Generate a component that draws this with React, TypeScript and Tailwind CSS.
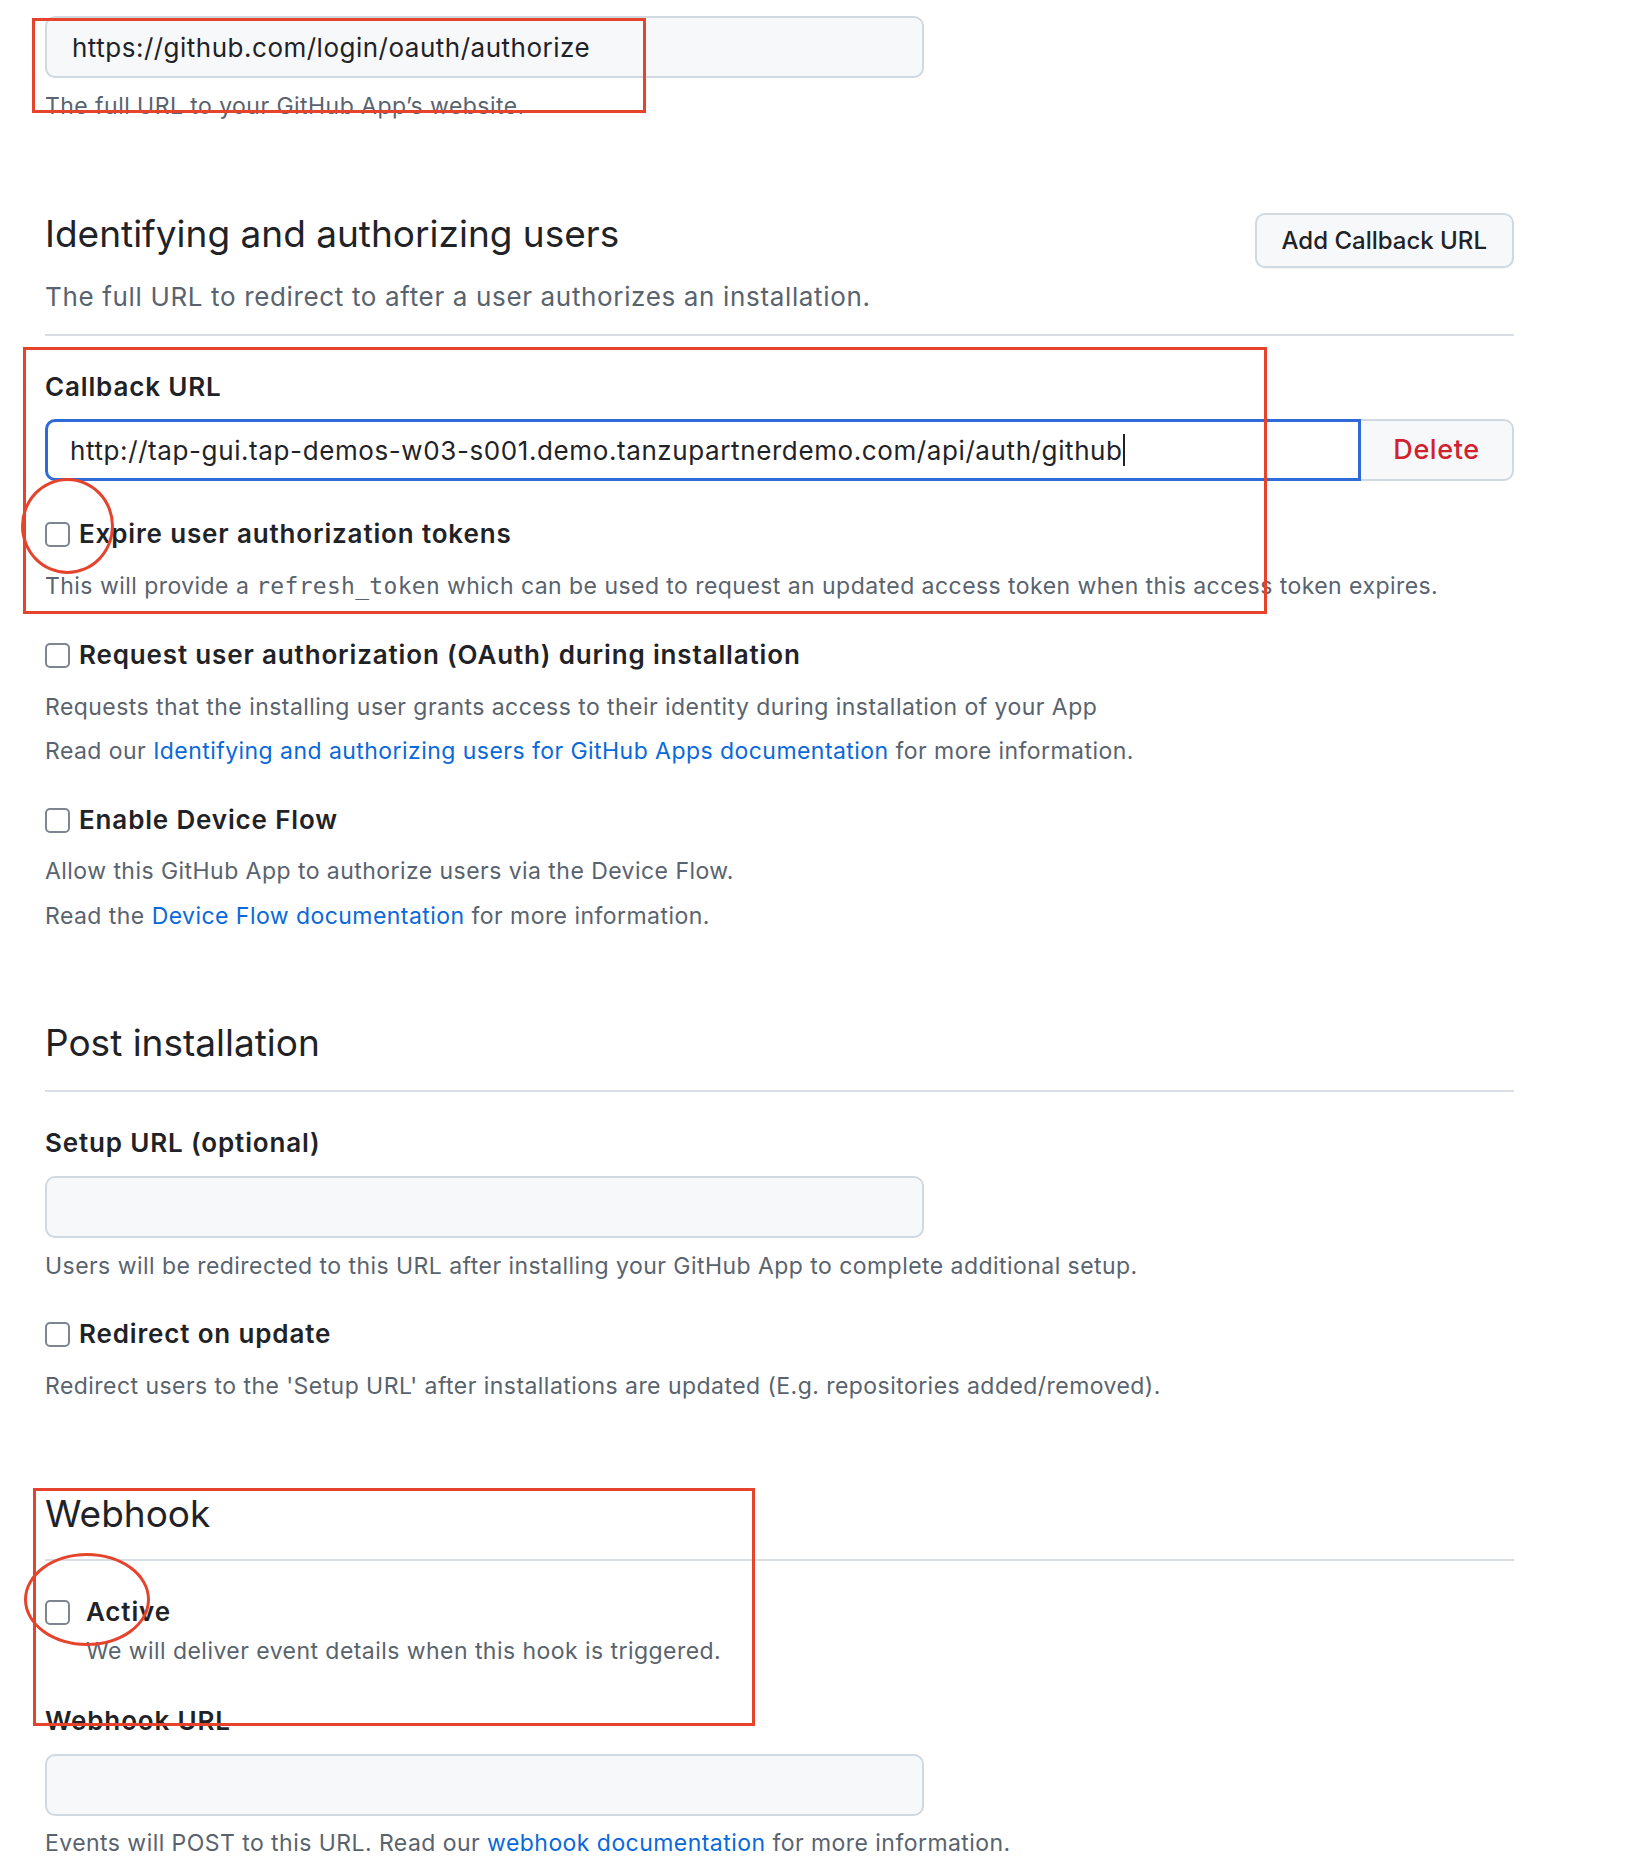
import type { ReactNode } from "react";

const Note = ({ children, className = "" }: { children: ReactNode; className?: string }) => (
  <p className={`text-[23px] leading-[32px] tracking-[0.45px] text-[#59636e] ${className}`}>{children}</p>
);

const Label = ({ children, className = "" }: { children: ReactNode; className?: string }) => (
  <div className={`text-[26px] leading-[34px] font-semibold tracking-[0.85px] ${className}`}>{children}</div>
);

const Heading = ({ children, className = "" }: { children: ReactNode; className?: string }) => (
  <h2 className={`text-[37px] leading-[46px] font-normal ${className}`}>{children}</h2>
);

const Divider = ({ className = "" }: { className?: string }) => (
  <div className={`h-[2px] bg-[#d8dee4] ${className}`} />
);

const Box = () => (
  <span className="inline-block w-[25px] h-[25px] shrink-0 rounded-[5px] border-2 border-[#7d8590] bg-white" />
);

const CheckRow = ({ children, className = "", gap = "gap-[9px]" }: { children: ReactNode; className?: string; gap?: string }) => (
  <label className={`flex items-center ${gap} ${className}`}>
    <Box />
    <span className="text-[26px] leading-[34px] font-semibold tracking-[0.85px]">{children}</span>
  </label>
);

const Link = ({ children }: { children: ReactNode }) => (
  <a className="text-[#0969da]">{children}</a>
);

const Field = ({ value, className = "" }: { value?: string; className?: string }) => (
  <div
    className={`w-[879px] h-[62px] rounded-[10px] border-2 border-[#d1d9e0] bg-[#f6f8fa] px-[25px] flex items-center text-[26px] tracking-[0.5px] ${className}`}
  >
    {value}
  </div>
);

export default function App() {
  return (
    <div className="relative w-[1630px] h-[1872px] overflow-hidden bg-white font-['Inter',sans-serif] text-[#1f2328]">
      <div className="pl-[45px] w-[1514px] pt-[16px]">
        <Field value="https://github.com/login/oauth/authorize" />
        <Note className="mt-[12px] leading-[30px]">The full URL to your GitHub App’s website.</Note>

        <div className="mt-[91px] flex items-start justify-between">
          <Heading className="-mt-[2px]">Identifying and authorizing users</Heading>
          <button className="h-[55px] px-[25px] rounded-[10px] border-2 border-[#d1d9e0] bg-[#f6f8fa] text-[24px] font-medium shadow-[0_1px_0_rgba(31,35,40,0.04)]">
            Add Callback URL
          </button>
        </div>
        <p className="mt-[13px] text-[26px] leading-[32px] tracking-[0.65px] text-[#59636e]">
          The full URL to redirect to after a user authorizes an installation.
        </p>
        <Divider className="mt-[21px]" />

        <Label className="mt-[34px]">Callback URL</Label>
        <div className="mt-[15px] flex h-[62px]">
          <div className="flex-1 flex items-center rounded-l-[10px] border-[3px] border-[#2f6bd8] bg-white pl-[22px] text-[26px] tracking-[0.6px]">
            <span>http://tap-gui.tap-demos-w03-s001.demo.tanzupartnerdemo.com/api/auth/github</span>
            <span className="inline-block w-[2px] h-[32px] bg-[#1f2328]" />
          </div>
          <button className="w-[153px] rounded-r-[10px] border-2 border-l-0 border-[#d1d9e0] bg-[#f6f8fa] text-[27px] font-medium tracking-[0.6px] text-[#cf222e]">
            Delete
          </button>
        </div>

        <CheckRow className="mt-[36px]">Expire user authorization tokens</CheckRow>
        <Note className="mt-[19px]">
          This will provide a{" "}
          <code className="font-['DejaVu_Sans_Mono',monospace] text-[23px] tracking-[0.3px]">refresh_token</code> which
          can be used to request an updated access token when this access token expires.
        </Note>

        <CheckRow className="mt-[36px]">Request user authorization (OAuth) during installation</CheckRow>
        <Note className="mt-[19px]">
          Requests that the installing user grants access to their identity during installation of your App
        </Note>
        <Note className="mt-[12px]">
          Read our <Link>Identifying and authorizing users for GitHub Apps documentation</Link> for more information.
        </Note>

        <CheckRow className="mt-[36px]">Enable Device Flow</CheckRow>
        <Note className="mt-[18px]">Allow this GitHub App to authorize users via the Device Flow.</Note>
        <Note className="mt-[13px]">
          Read the <Link>Device Flow documentation</Link> for more information.
        </Note>

        <Heading className="mt-[88px]">Post installation</Heading>
        <Divider className="mt-[24px]" />

        <Label className="mt-[34px]">Setup URL (optional)</Label>
        <Field className="mt-[16px]" />
        <Note className="mt-[12px]">
          Users will be redirected to this URL after installing your GitHub App to complete additional setup.
        </Note>

        <CheckRow className="mt-[35px]">Redirect on update</CheckRow>
        <Note className="mt-[19px]">
          Redirect users to the 'Setup URL' after installations are updated (E.g. repositories added/removed).
        </Note>

        <Heading className="mt-[89px]">Webhook</Heading>
        <Divider className="mt-[22px]" />

        <CheckRow className="mt-[34px]" gap="gap-[16px]">Active</CheckRow>
        <Note className="mt-[6px] pl-[41px]">We will deliver event details when this hook is triggered.</Note>

        <Label className="mt-[37px]">Webhook URL</Label>
        <Field className="mt-[16px]" />
        <Note className="mt-[11px]">
          Events will POST to this URL. Read our <Link>webhook documentation</Link> for more information.
        </Note>
      </div>

      {/* annotation marks drawn over the screenshot */}
      <div className="absolute left-[32px] top-[18px] w-[614px] h-[95px] border-[3px] border-[#e5432c]" />
      <div className="absolute left-[23px] top-[347px] w-[1244px] h-[267px] border-[3px] border-[#e5432c]" />
      <div className="absolute left-[33px] top-[1488px] w-[722px] h-[238px] border-[3px] border-[#e5432c]" />
      <div className="absolute left-[21px] top-[478px] w-[93px] h-[96px] rounded-[50%] border-[3px] border-[#e5432c]" />
      <div className="absolute left-[24px] top-[1553px] w-[126px] h-[93px] rounded-[50%] border-[3px] border-[#e5432c]" />
    </div>
  );
}
